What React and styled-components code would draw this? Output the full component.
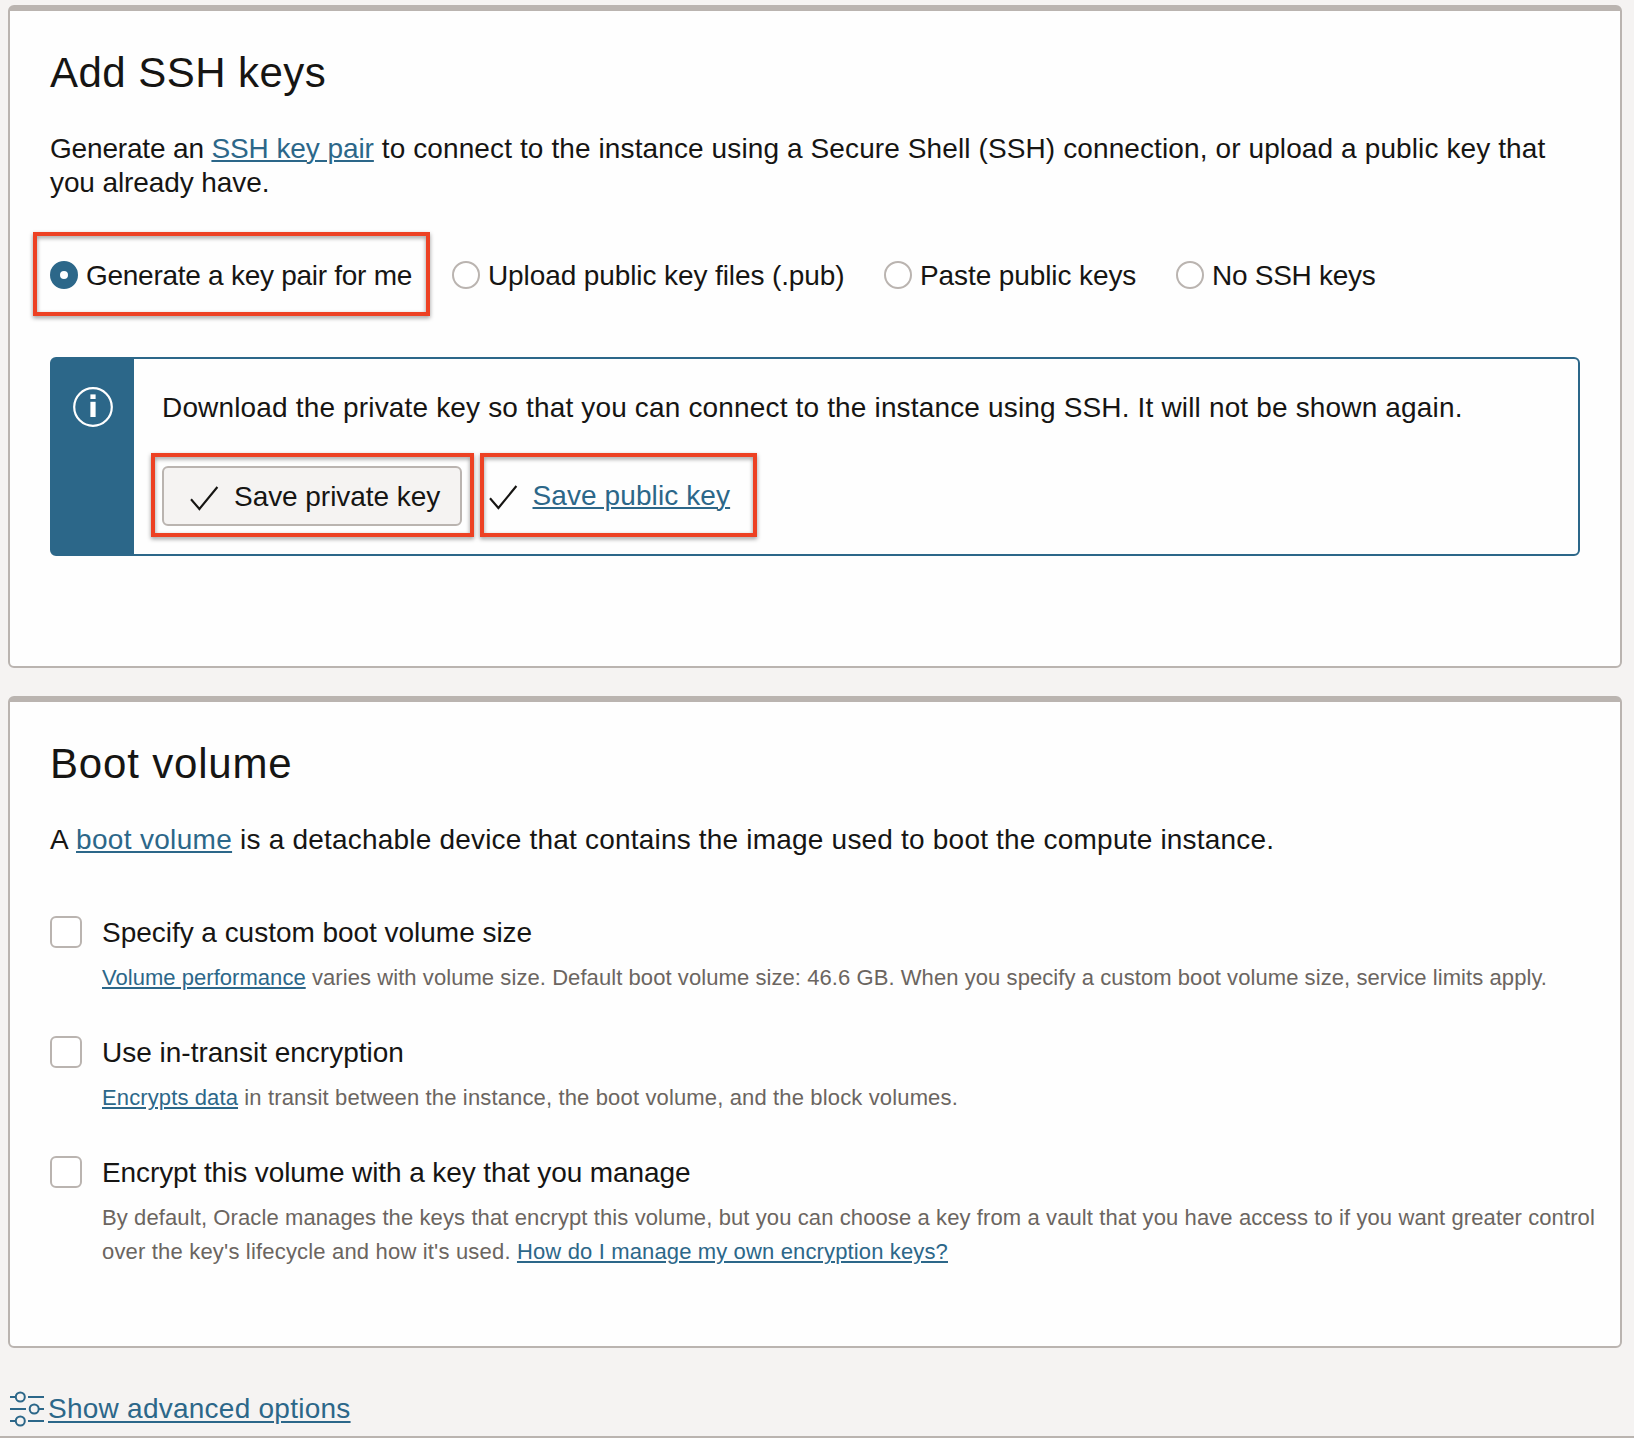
import React from "react";
import styled, { createGlobalStyle } from "styled-components";

const color = {
  page: "#f5f3f2",
  card: "#fefefe",
  border: "#bab4b0",
  text: "#161513",
  muted: "#6b6560",
  link: "#2c6789",
  highlight: "#ed4123",
};

const GlobalStyle = createGlobalStyle`
  *, *::before, *::after { box-sizing: border-box; }
  body {
    margin: 0;
    background: #ffffff;
    color: ${color.text};
    font-family: "Liberation Sans", Arial, sans-serif;
    font-size: 28px;
    line-height: 34px;
  }
`;

const Page = styled.div`
  width: 1634px;
  height: 1438px;
  padding: 5px 12px 0 8px;
  background: ${color.page};
  border-bottom: 2px solid ${color.border};
`;

const Card = styled.section`
  width: 1614px;
  height: ${(p) => p.$height}px;
  margin-bottom: ${(p) => p.$gap}px;
  padding: 38px 20px 0 40px;
  background: ${color.card};
  border: 2px solid ${color.border};
  border-top-width: 6px;
  border-radius: 6px;
`;

const Heading = styled.h2`
  margin: 0 0 35px;
  font-size: 42px;
  font-weight: 400;
  line-height: 48px;
  letter-spacing: ${(p) => p.$track}px;
`;

const Paragraph = styled.p`
  margin: 0;
  white-space: nowrap;
`;

const Text = styled.span`
  letter-spacing: ${(p) => p.$track || 0}px;
  white-space: pre;
`;

const ControlText = styled(Text)`
  margin-top: 2px;
`;

const Link = styled.a`
  color: ${color.link};
  letter-spacing: ${(p) => p.$track || 0}px;
  text-decoration: underline;
  text-decoration-thickness: 2px;
  text-underline-offset: ${(p) => p.$offset || 2}px;
  cursor: pointer;
`;

const RadioGroup = styled.div`
  display: flex;
  height: 34px;
  margin: 58px 0 65px;
`;

const Radio = styled.label`
  position: relative;
  display: flex;
  align-items: center;
  gap: 8px;
  width: ${(p) => p.$width}px;
`;

const RadioDot = styled.span`
  flex: none;
  width: 28px;
  height: 28px;
  border-radius: 50%;
  border: ${(p) => (p.$checked ? `10px solid ${color.link}` : `2px solid ${color.border}`)};
  background: #ffffff;
`;

const Highlight = styled.span`
  position: absolute;
  top: ${(p) => p.$top}px;
  left: ${(p) => p.$left}px;
  width: ${(p) => p.$width}px;
  height: 84px;
  border: 4px solid ${color.highlight};
  filter: drop-shadow(0 2px 2px rgba(0, 0, 0, 0.4));
  pointer-events: none;
`;

const Notice = styled.div`
  display: flex;
  width: 1530px;
  height: 199px;
  border: 2px solid ${color.link};
  border-radius: 6px;
`;

const NoticeSide = styled.div`
  display: flex;
  justify-content: center;
  width: 82px;
  padding: 28px 0 0;
  background: ${color.link};
`;

const NoticeBody = styled.div`
  padding: 32px 0 0 28px;
`;

const NoticeText = styled.p`
  margin: 0 0 41px;
  white-space: nowrap;
`;

const Actions = styled.div`
  display: flex;
  align-items: center;
`;

const Action = styled.div`
  position: relative;
  display: flex;
`;

const Button = styled.button`
  display: flex;
  align-items: center;
  width: 300px;
  height: 60px;
  padding: 0 0 0 26px;
  background: ${color.page};
  border: 2px solid ${color.border};
  border-radius: 6px;
  color: inherit;
  font: inherit;
`;

const LinkAction = styled.div`
  display: flex;
  align-items: center;
  height: 60px;
  padding: 0 0 2px 27px;
`;

const CheckSvg = styled.svg`
  flex: none;
  width: 30px;
  height: 28px;
  margin-right: ${(p) => p.$gap}px;
  margin-top: 4px;
`;

const ActionLink = styled(Link)`
  margin-top: 2px;
`;

const Options = styled.div`
  display: flex;
  flex-direction: column;
  gap: 40px;
  margin-top: 58px;
`;

const OptionRow = styled.div`
  display: grid;
  grid-template-columns: 32px 1fr;
  column-gap: 20px;
  row-gap: 11px;
`;

const Checkbox = styled.span`
  width: 32px;
  height: 32px;
  margin-top: 1px;
  border: 2px solid ${color.border};
  border-radius: 6px;
  background: #ffffff;
`;

const OptionLabel = styled.label`
  padding-top: 1px;
  letter-spacing: ${(p) => p.$track || 0}px;
  white-space: nowrap;
`;

const OptionHint = styled.div`
  grid-column: 2;
  color: ${color.muted};
  font-size: 22px;
  white-space: nowrap;
`;

const Footer = styled.footer`
  display: flex;
  align-items: center;
  gap: 4px;
  height: 38px;
`;

function CheckIcon({ gap }) {
  return (
    <CheckSvg viewBox="0 0 30 28" $gap={gap} aria-hidden="true">
      <path d="M1 15.2 L9.4 25 L27.4 3" fill="none" stroke={color.text} strokeWidth="2.1" />
    </CheckSvg>
  );
}

function InfoIcon() {
  return (
    <svg width="40" height="40" viewBox="0 0 40 40" aria-hidden="true">
      <circle cx="20" cy="20" r="18.8" fill="none" stroke="#fff" strokeWidth="2.2" />
      <rect x="17.4" y="7.4" width="5.2" height="4.6" fill="#fff" />
      <rect x="17.4" y="14.8" width="5.2" height="15.2" fill="#fff" />
    </svg>
  );
}

function SlidersIcon() {
  return (
    <svg width="36" height="36" viewBox="0 0 36 36" aria-hidden="true">
      <g fill="none" stroke={color.link} strokeWidth="2">
        <path d="M2 6H8M20 6H36M2 18H18M31 18H36M2 30H8M20 30H36" />
        <circle cx="12.3" cy="6" r="4.5" />
        <circle cx="26.2" cy="18" r="4.5" />
        <circle cx="12.3" cy="30" r="4.5" />
      </g>
    </svg>
  );
}

const radios = [
  { label: "Generate a key pair for me", width: 402, track: -0.27, checked: true },
  { label: "Upload public key files (.pub)", width: 432, track: -0.1 },
  { label: "Paste public keys", width: 292, track: -0.1 },
  { label: "No SSH keys", width: 200, track: -0.28 },
];

export default function App() {
  return (
    <>
      <GlobalStyle />
      <Page>
        <Card $height={663} $gap={28}>
          <Heading $track={0.45}>Add SSH keys</Heading>
          <Paragraph>
            <Text $track={-0.17}>{"Generate an "}</Text>
            <Link $track={-0.08}>SSH key pair</Link>
            <Text $track={0.11}>
              {" to connect to the instance using a Secure Shell (SSH) connection, or upload a public key that"}
            </Text>
            <br />
            <Text $track={-0.1}>you already have.</Text>
          </Paragraph>
          <RadioGroup>
            {radios.map((r) => (
              <Radio key={r.label} $width={r.width}>
                {r.checked && <Highlight $top={-26} $left={-17} $width={397} />}
                <RadioDot $checked={r.checked} />
                <ControlText $track={r.track}>{r.label}</ControlText>
              </Radio>
            ))}
          </RadioGroup>
          <Notice>
            <NoticeSide>
              <InfoIcon />
            </NoticeSide>
            <NoticeBody>
              <NoticeText>
                <Text $track={0.16}>
                  Download the private key so that you can connect to the instance using SSH. It will not be shown again.
                </Text>
              </NoticeText>
              <Actions>
                <Action>
                  <Highlight $top={-13} $left={-11} $width={323} />
                  <Button>
                    <CheckIcon gap={14} />
                    <ControlText $track={-0.05}>Save private key</ControlText>
                  </Button>
                </Action>
                <Action>
                  <Highlight $top={-13} $left={18} $width={277} />
                  <LinkAction>
                    <CheckIcon gap={13.5} />
                    <ActionLink $track={0.1}>Save public key</ActionLink>
                  </LinkAction>
                </Action>
              </Actions>
            </NoticeBody>
          </Notice>
        </Card>

        <Card $height={652} $gap={42}>
          <Heading $track={0.82}>Boot volume</Heading>
          <Paragraph>
            <Text $track={0.55}>{"A "}</Text>
            <Link $track={0.32}>boot volume</Link>
            <Text $track={0.2}>
              {" is a detachable device that contains the image used to boot the compute instance."}
            </Text>
          </Paragraph>
          <Options>
            <OptionRow>
              <Checkbox />
              <OptionLabel $track={-0.03}>Specify a custom boot volume size</OptionLabel>
              <OptionHint>
                <Link $track={0.04}>Volume performance</Link>
                <Text $track={0.073}>
                  {" varies with volume size. Default boot volume size: 46.6 GB. When you specify a custom boot volume size, service limits apply."}
                </Text>
              </OptionHint>
            </OptionRow>
            <OptionRow>
              <Checkbox />
              <OptionLabel>Use in-transit encryption</OptionLabel>
              <OptionHint>
                <Link $track={0.115}>Encrypts data</Link>
                <Text $track={0.145}>
                  {" in transit between the instance, the boot volume, and the block volumes."}
                </Text>
              </OptionHint>
            </OptionRow>
            <OptionRow>
              <Checkbox />
              <OptionLabel $track={-0.1}>Encrypt this volume with a key that you manage</OptionLabel>
              <OptionHint>
                <Text $track={0.104}>
                  By default, Oracle manages the keys that encrypt this volume, but you can choose a key from a vault that you have access to if you want greater control
                </Text>
                <br />
                <Text $track={0.18}>{"over the key's lifecycle and how it's used. "}</Text>
                <Link $track={0.14}>How do I manage my own encryption keys?</Link>
              </OptionHint>
            </OptionRow>
          </Options>
        </Card>

        <Footer>
          <SlidersIcon />
          <Link $track={0.25} $offset={3}>Show advanced options</Link>
        </Footer>
      </Page>
    </>
  );
}
